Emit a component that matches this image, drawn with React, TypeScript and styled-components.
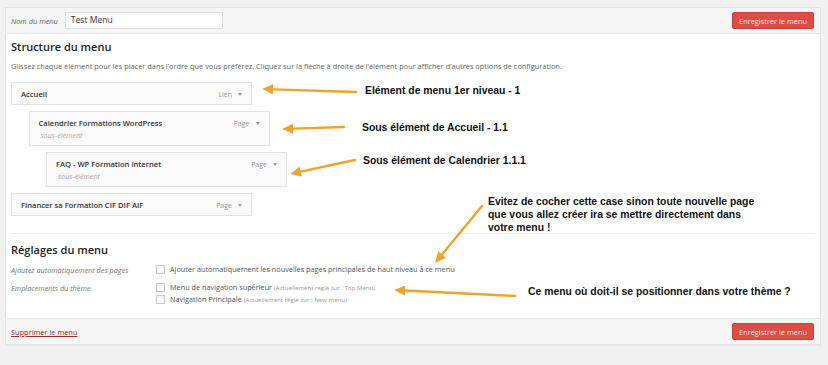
import * as React from 'react'
import styled, { createGlobalStyle } from 'styled-components'

const GlobalStyle = createGlobalStyle`
  html, body {
    margin: 0;
    padding: 0;
    background: #f1f1f1;
  }
  body {
    font-family: 'Open Sans', 'Noto Sans', sans-serif;
    color: #444;
  }
`

const Page = styled.div`
  position: relative;
  width: 828px;
  height: 365px;
  padding: 7px 7px 0 5px;
  box-sizing: border-box;
  overflow: hidden;
`

const Panel = styled.div`
  background: #fff;
  border: 1px solid #e3e3e3;
  box-shadow: 0 1px 1px rgba(0, 0, 0, 0.04);
`

const Bar = styled.div<{ $top?: boolean }>`
  display: flex;
  align-items: center;
  justify-content: space-between;
  height: 25px;
  padding: 0 6px 0 5px;
  background: #f5f5f5;
  border-${p => (p.$top ? 'bottom' : 'top')}: 1px solid #e6e6e6;
`

const NameField = styled.label`
  display: flex;
  align-items: center;
  gap: 7px;
  font-size: 7.4px;
  font-style: italic;
  color: #666;
`

const NameInput = styled.div`
  width: 158px;
  height: 17px;
  border: 1px solid #e1e1e1;
  background: #fff;
  font-size: 8.6px;
  font-style: normal;
  color: #333;
  line-height: 15px;
  padding-left: 5px;
  box-sizing: border-box;
`

const SaveButton = styled.button`
  height: 17px;
  padding: 0 6px;
  border: 1px solid #c9403a;
  border-radius: 2px;
  background: #dc4d45;
  color: #fbe6e4;
  font-family: 'Open Sans', sans-serif;
  font-size: 7.4px;
  cursor: pointer;
`

const Body = styled.div`
  padding: 6px 6px 0 5px;
  height: 284px;
  box-sizing: border-box;
`

const Heading = styled.h3`
  margin: 0;
  font-size: 11px;
  line-height: 14px;
  font-weight: 600;
  color: #222;
`

const Description = styled.p`
  margin: 7px 0 11px;
  font-size: 7.4px;
  line-height: 10px;
  color: #666;
`

const ItemList = styled.div`
  display: flex;
  flex-direction: column;
  gap: 6px;
`

const Item = styled.div<{ $depth: number }>`
  margin-left: ${p => p.$depth * 17.5}px;
  width: 241px;
  box-sizing: border-box;
  display: flex;
  justify-content: space-between;
  align-items: flex-start;
  padding: 7px 9px 5px 9px;
  background: #fafafa;
  border: 1px solid #e2e2e2;
`

const ItemTitle = styled.div`
  font-size: 7.6px;
  line-height: 9px;
  font-weight: 600;
  color: #333;
`

const SubLabel = styled.div`
  margin-top: 3px;
  padding-left: 2px;
  font-size: 7.2px;
  line-height: 9px;
  font-style: italic;
  color: #aaa;
`

const ItemType = styled.div`
  display: flex;
  align-items: center;
  gap: 6px;
  font-size: 7px;
  line-height: 9px;
  color: #999;
`

const Caret = styled.span`
  width: 0;
  height: 0;
  border-left: 2.5px solid transparent;
  border-right: 2.5px solid transparent;
  border-top: 3px solid #999;
`

const Divider = styled.hr`
  margin: 17px 0 9px;
  border: 0;
  border-top: 1px solid #eee;
`

const Settings = styled.div`
  display: grid;
  grid-template-columns: 145px 1fr;
  row-gap: 4px;
  margin-top: 8px;
  font-size: 7.3px;
  line-height: 9px;
`

const SettingLabel = styled.div<{ $pad?: number }>`
  font-style: italic;
  color: #777;
  padding-top: ${p => (p.$pad ?? 0) + 1}px;
`

const Options = styled.div<{ $pad?: number }>`
  display: flex;
  flex-direction: column;
  gap: 3px;
  padding-top: ${p => p.$pad ?? 0}px;
`

const Option = styled.label`
  display: flex;
  align-items: center;
  gap: 5px;
  color: #555;
`

const Box = styled.span`
  width: 9px;
  height: 9px;
  box-sizing: border-box;
  border: 1px solid #c8c8c8;
  background: #fff;
  box-shadow: inset 0 1px 2px rgba(0, 0, 0, 0.08);
`

const Hint = styled.span`
  font-size: 6.1px;
  color: #999;
`

const DeleteLink = styled.a`
  font-size: 7.4px;
  color: #a0302a;
  text-decoration: underline;
`

const Notes = styled.svg`
  position: absolute;
  left: 0;
  top: 0;
  pointer-events: none;
`

const Note = styled.div<{ $x: number; $y: number }>`
  position: absolute;
  left: ${p => p.$x}px;
  top: ${p => p.$y}px;
  font-family: 'Liberation Sans', Arial, sans-serif;
  font-weight: bold;
  font-size: 10.4px;
  line-height: 13px;
  color: #111;
  white-space: nowrap;
`

const arrows = [
  { x1: 356, y1: 92, x2: 262, y2: 89 },
  { x1: 344, y1: 127, x2: 282, y2: 129 },
  { x1: 355, y1: 160, x2: 290, y2: 174 },
  { x1: 482, y1: 206, x2: 435, y2: 263 },
  { x1: 515, y1: 296, x2: 394, y2: 290 },
]

const Arrow = ({ x1, y1, x2, y2 }: { x1: number; y1: number; x2: number; y2: number }) => {
  const a = Math.atan2(y2 - y1, x2 - x1)
  const len = 11
  const w = 5
  const bx = x2 - Math.cos(a) * len
  const by = y2 - Math.sin(a) * len
  const px = -Math.sin(a) * w
  const py = Math.cos(a) * w
  return (
    <g>
      <line x1={x1} y1={y1} x2={bx} y2={by} stroke="#f0a22e" strokeWidth={2.4} strokeLinecap="round" />
      <polygon points={`${x2},${y2} ${bx + px},${by + py} ${bx - px},${by - py}`} fill="#f0a22e" />
    </g>
  )
}

const items = [
  { title: 'Accueil', type: 'Lien', depth: 0 },
  { title: 'Calendrier Formations WordPress', type: 'Page', depth: 1, sub: true },
  { title: 'FAQ - WP Formation internet', type: 'Page', depth: 2, sub: true },
  { title: 'Financer sa Formation CIF DIF AIF', type: 'Page', depth: 0 },
]

export default function App() {
  return (
    <>
      <GlobalStyle />
      <Page>
        <Panel>
          <Bar $top>
            <NameField>
              Nom du menu
              <NameInput>Test Menu</NameInput>
            </NameField>
            <SaveButton>Enregistrer le menu</SaveButton>
          </Bar>
          <Body>
            <Heading>Structure du menu</Heading>
            <Description>
              Glissez chaque élément pour les placer dans l’ordre que vous préférez. Cliquez sur la flèche à droite de l’élément pour afficher d’autres options de configuration.
            </Description>
            <ItemList>
              {items.map(it => (
                <Item key={it.title} $depth={it.depth}>
                  <div>
                    <ItemTitle>{it.title}</ItemTitle>
                    {it.sub && <SubLabel>sous-élément</SubLabel>}
                  </div>
                  <ItemType>
                    {it.type}
                    <Caret />
                  </ItemType>
                </Item>
              ))}
            </ItemList>
            <Divider />
            <Heading>Réglages du menu</Heading>
            <Settings>
              <SettingLabel>Ajoutez automatiquement des pages</SettingLabel>
              <Options>
                <Option>
                  <Box />
                  Ajouter automatiquement les nouvelles pages principales de haut niveau à ce menu
                </Option>
              </Options>
              <SettingLabel $pad={4}>Emplacements du thème</SettingLabel>
              <Options $pad={4}>
                <Option>
                  <Box />
                  <span>
                    Menu de navigation supérieur <Hint>(Actuellement réglé sur : Top Menu)</Hint>
                  </span>
                </Option>
                <Option>
                  <Box />
                  <span>
                    Navigation Principale <Hint>(Actuellement réglé sur : New menu)</Hint>
                  </span>
                </Option>
              </Options>
            </Settings>
          </Body>
          <Bar>
            <DeleteLink href="#">Supprimer le menu</DeleteLink>
            <SaveButton>Enregistrer le menu</SaveButton>
          </Bar>
        </Panel>
        <Notes width={828} height={365}>
          {arrows.map((a, i) => (
            <Arrow key={i} {...a} />
          ))}
        </Notes>
        <Note $x={365} $y={84}>Elément de menu 1er niveau - 1</Note>
        <Note $x={362} $y={121}>Sous élément de Accueil - 1.1</Note>
        <Note $x={363} $y={154}>Sous élément de Calendrier 1.1.1</Note>
        <Note $x={488} $y={195}>
          Evitez de cocher cette case sinon toute nouvelle page
          <br />
          que vous allez créer ira se mettre directement dans
          <br />
          votre menu !
        </Note>
        <Note $x={528} $y={285}>Ce menu où doit-il se positionner dans votre thème ?</Note>
      </Page>
    </>
  )
}
